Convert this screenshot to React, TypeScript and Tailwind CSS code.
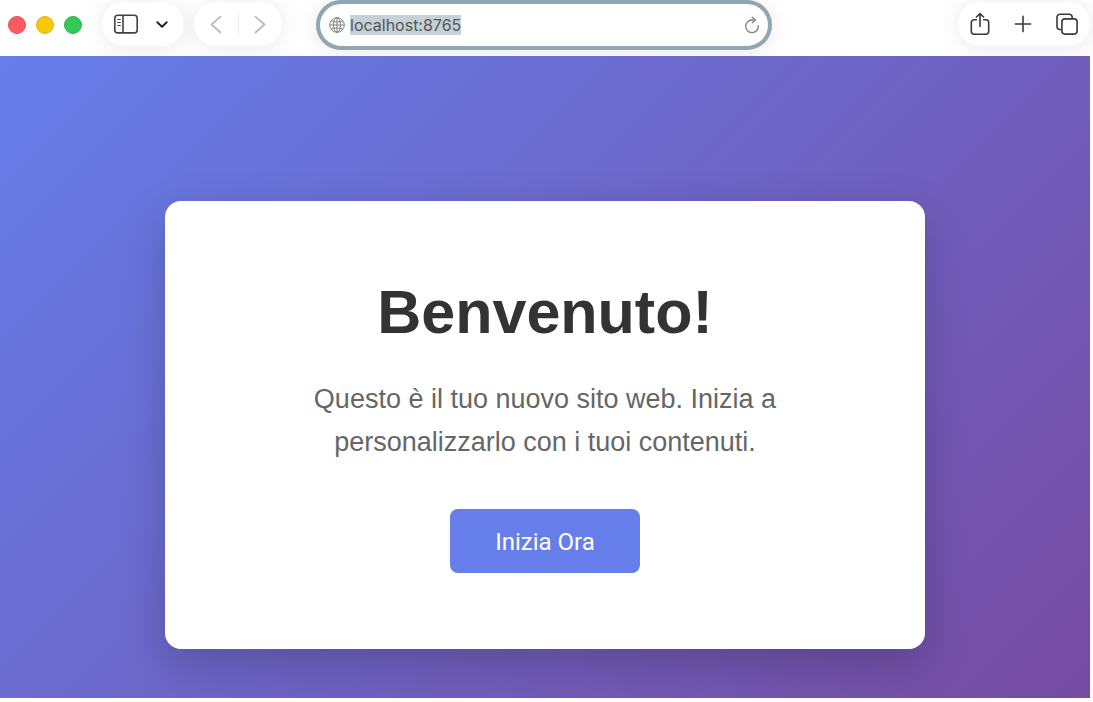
import type { ReactNode } from 'react';

const pill =
  'flex h-11 items-center rounded-full bg-white shadow-[0_2px_24px_rgba(0,0,0,0.09)]';

function ToolButton({ label, className, children }: { label: string; className: string; children: ReactNode }) {
  return (
    <button type="button" aria-label={label} className={`flex h-11 items-center justify-center ${className}`}>
      {children}
    </button>
  );
}

function Toolbar() {
  return (
    <header className="flex h-14 items-start overflow-hidden bg-white">
      <div className="flex h-12 items-center gap-2.5 pt-px pl-2">
        <button type="button" aria-label="Chiudi" className="size-[18px] rounded-full border border-[#e3525a] bg-[#ff5b60]" />
        <button type="button" aria-label="Riduci" className="size-[18px] rounded-full border border-[#dfb21a] bg-[#f9c804]" />
        <button type="button" aria-label="Ingrandisci" className="size-[18px] rounded-full border border-[#30b350] bg-[#34c759]" />
      </div>

      <div className={`${pill} mt-[2px] ml-5 w-[82px]`}>
        <ToolButton label="Barra laterale" className="w-12 text-[#424242]">
          <svg width="24" height="20" viewBox="0 0 24 20" fill="none" stroke="currentColor" strokeWidth="1.6" strokeLinecap="round">
            <rect x="0.8" y="1.3" width="22.4" height="17.6" rx="3" />
            <path d="M9 1.5v17.2" />
            <path d="M3.7 5.5h2.6M3.7 8.5h2.6M3.7 11.5h2.6" strokeWidth="1.1" />
          </svg>
        </ToolButton>
        <ToolButton label="Gruppi di pannelli" className="w-6 text-[#222]">
          <svg width="12" height="8" viewBox="0 0 12 8" fill="none" stroke="currentColor" strokeWidth="1.9" strokeLinecap="round" strokeLinejoin="round">
            <path d="M1.3 2.2 6 6.7l4.7-4.5" />
          </svg>
        </ToolButton>
      </div>

      <div className={`${pill} mt-[2px] ml-2.5 w-[88px] text-[#b9b9b9]`}>
        <ToolButton label="Indietro" className="w-11">
          <svg width="12" height="20" viewBox="0 0 12 20" fill="none" stroke="currentColor" strokeWidth="1.7" strokeLinecap="round" strokeLinejoin="round">
            <path d="M10.5 2.6 1.5 10.5l9 8" />
          </svg>
        </ToolButton>
        <span className="h-6 w-px shrink-0 bg-[#f0f0f0]" />
        <ToolButton label="Avanti" className="w-11">
          <svg width="12" height="20" viewBox="0 0 12 20" fill="none" stroke="currentColor" strokeWidth="1.7" strokeLinecap="round" strokeLinejoin="round">
            <path d="m1.5 2.6 9 7.9-9 8" />
          </svg>
        </ToolButton>
      </div>

      <div className="ml-[34px] flex h-[50px] max-w-[456px] flex-1 items-center rounded-full border-4 border-[#91a5b2] bg-white pr-2 pl-[9px] shadow-[0_2px_24px_rgba(0,0,0,0.09)]">
        <svg width="16" height="16" viewBox="0 0 16 16" fill="none" stroke="#777" strokeWidth="0.9" className="mr-[5px] shrink-0">
          <circle cx="8" cy="8" r="7.3" />
          <ellipse cx="8" cy="8" rx="3.5" ry="7.3" />
          <path d="M8 .7v14.6M.7 8h14.6M2.2 3.9c3.4 1.5 8.2 1.5 11.6 0M2.2 12.1c3.4-1.5 8.2-1.5 11.6 0" />
        </svg>
        <input
          type="text"
          aria-label="Indirizzo"
          defaultValue="localhost:8765"
          className="field-sizing-content h-5 min-w-0 bg-[#c5d1d8] font-[Inter,sans-serif] text-[16px] leading-5 text-[#555] outline-none"
        />
        <button type="button" aria-label="Ricarica" className="ml-auto text-[#858585]">
          <svg width="16" height="18" viewBox="0 0 16 18" fill="none" stroke="currentColor" strokeWidth="1.4" strokeLinecap="round" strokeLinejoin="round">
            <path d="M14.3 9.8A6.3 6.3 0 1 1 8 4h3" />
            <path d="M8.3 1.2 11.2 4 8.3 6.8" />
          </svg>
        </button>
      </div>

      <div className={`${pill} mt-[2px] mr-[3px] ml-auto w-[132px] text-[#3a3a3a]`}>
        <ToolButton label="Condividi" className="w-11">
          <svg width="20" height="24" viewBox="0 0 20 24" fill="none" stroke="currentColor" strokeWidth="1.6" strokeLinecap="round" strokeLinejoin="round">
            <path d="M6.4 7.8H4.3a3 3 0 0 0-3 3v8.4a3 3 0 0 0 3 3h11.4a3 3 0 0 0 3-3v-8.4a3 3 0 0 0-3-3h-2.1" />
            <path d="M10 14.4V1.8M6.4 5 10 1.6 13.6 5" />
          </svg>
        </ToolButton>
        <ToolButton label="Nuovo pannello" className="w-[42px]">
          <svg width="18" height="18" viewBox="0 0 18 18" fill="none" stroke="currentColor" strokeWidth="1.6" strokeLinecap="round">
            <path d="M9 1.4v15.2M1.4 9h15.2" />
          </svg>
        </ToolButton>
        <ToolButton label="Panoramica pannelli" className="w-[46px]">
          <svg width="22" height="22" viewBox="0 0 22 22" fill="none" stroke="currentColor" strokeWidth="1.6">
            <path d="M5.6 16.5H4a3 3 0 0 1-3-3V4.2a3 3 0 0 1 3-3h9.2a3 3 0 0 1 3 3v1.6" />
            <rect x="5.9" y="5.9" width="15.2" height="15.2" rx="3" />
          </svg>
        </ToolButton>
      </div>
    </header>
  );
}

export default function App() {
  return (
    <div className="flex min-h-screen flex-col bg-white font-['Liberation_Sans',Arial,sans-serif]">
      <Toolbar />
      <main className="mr-[3px] mb-1 flex flex-1 flex-col items-center bg-[linear-gradient(135deg,#667eea_0%,#764ba2_100%)] px-6 pt-[145px] pb-12">
        <section className="flex w-full max-w-[760px] flex-col items-center rounded-2xl bg-white p-[76px] text-center shadow-[0_15px_46px_rgba(0,0,0,0.2)]">
          <h1 className="text-[61px] leading-[70px] font-bold text-[#333]">Benvenuto!</h1>
          <p className="mt-[31px] max-w-[520px] text-[27px] leading-[43px] text-[#666]">
            Questo è il tuo nuovo sito web. Inizia a personalizzarlo con i tuoi contenuti.
          </p>
          <button
            type="button"
            className="mt-[45px] h-16 w-[190px] rounded-lg bg-[#667eea] pt-0.5 font-[Roboto,sans-serif] text-[24px] leading-8 text-white"
          >
            Inizia Ora
          </button>
        </section>
      </main>
    </div>
  );
}
